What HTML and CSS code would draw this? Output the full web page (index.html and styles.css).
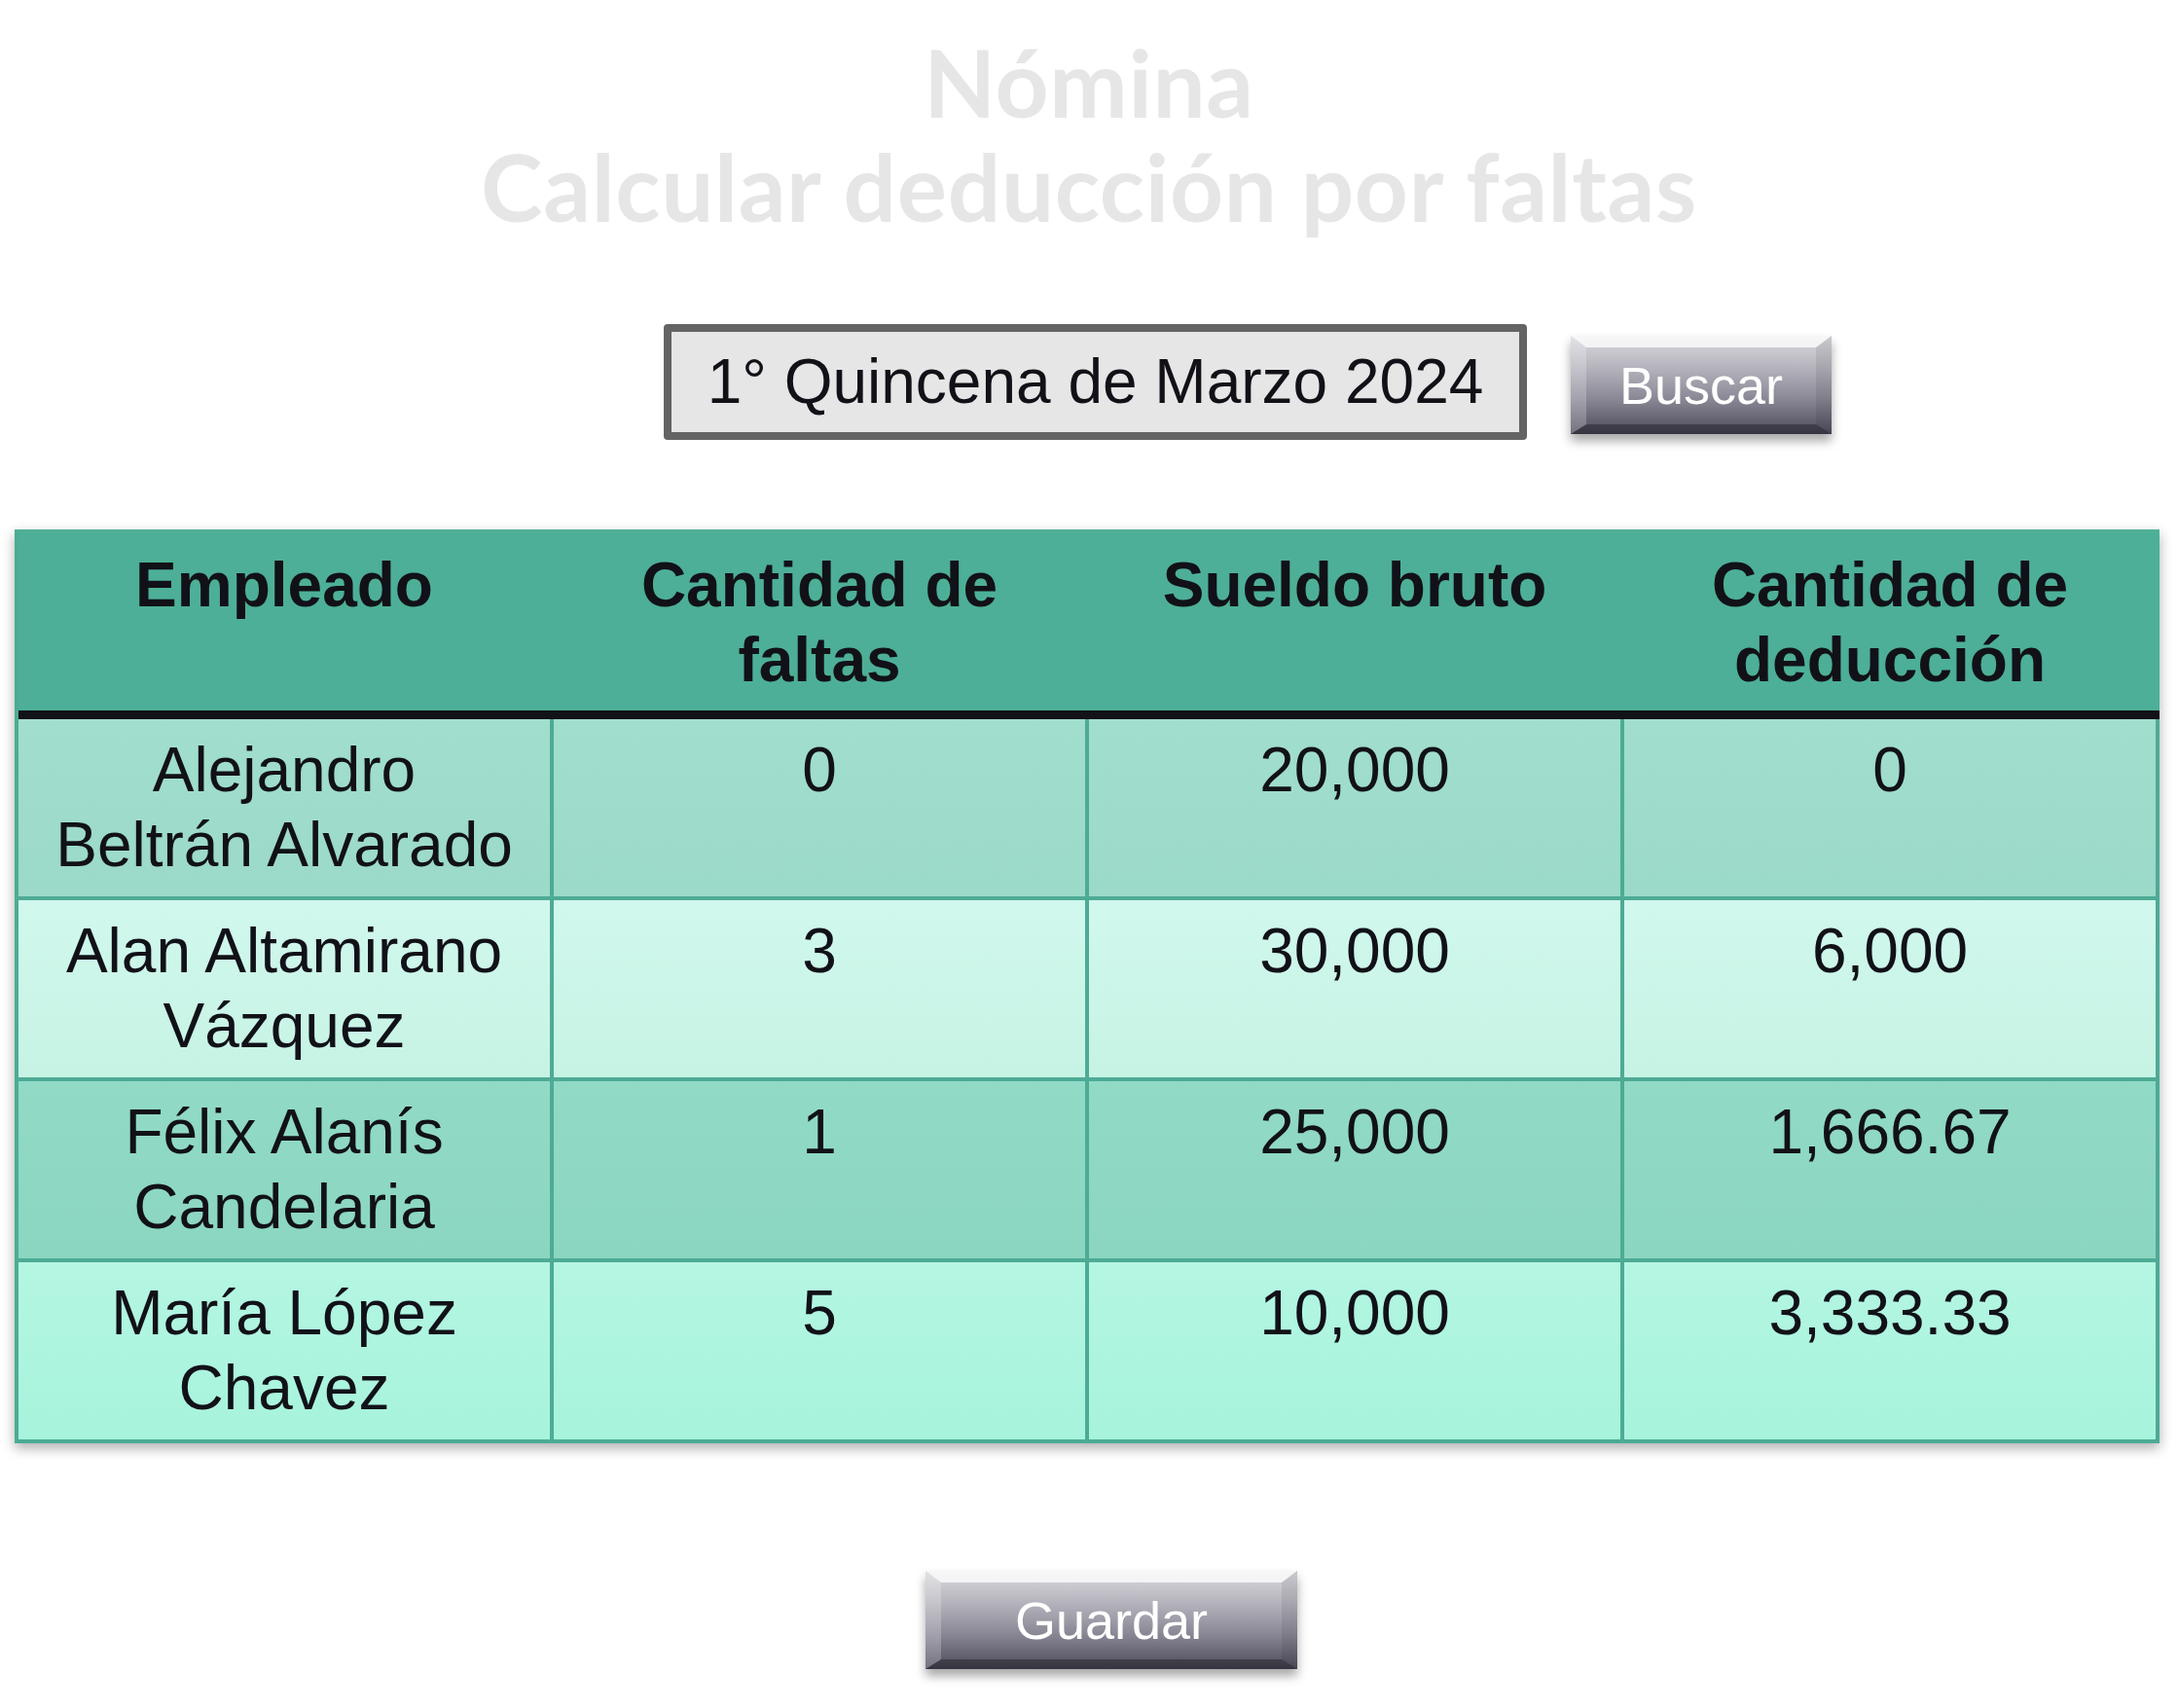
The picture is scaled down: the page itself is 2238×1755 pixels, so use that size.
FILE: index.html
```html
<!DOCTYPE html>
<html lang="es">
<head>
<meta charset="utf-8">
<title>Nómina - Calcular deducción por faltas</title>
<link rel="stylesheet" href="styles.css">
</head>
<body>
<header class="title">
  <h1>Nómina<br>Calcular deducción por faltas</h1>
</header>
<section class="search-row">
  <div class="period">1° Quincena de Marzo 2024</div>
  <button class="bevel-btn search-btn" type="button">Buscar</button>
</section>
<table class="payroll">
  <thead>
    <tr>
      <th>Empleado</th>
      <th>Cantidad de faltas</th>
      <th>Sueldo bruto</th>
      <th>Cantidad de deducción</th>
    </tr>
  </thead>
  <tbody>
    <tr class="r1">
      <td>Alejandro Beltrán Alvarado</td>
      <td>0</td>
      <td>20,000</td>
      <td>0</td>
    </tr>
    <tr class="r2">
      <td>Alan Altamirano Vázquez</td>
      <td>3</td>
      <td>30,000</td>
      <td>6,000</td>
    </tr>
    <tr class="r3">
      <td>Félix Alanís Candelaria</td>
      <td>1</td>
      <td>25,000</td>
      <td>1,666.67</td>
    </tr>
    <tr class="r4">
      <td>María López Chavez</td>
      <td>5</td>
      <td>10,000</td>
      <td>3,333.33</td>
    </tr>
  </tbody>
</table>
<footer class="actions">
  <button class="bevel-btn save-btn" type="button">Guardar</button>
</footer>
</body>
</html>
```

FILE: styles.css
```css
* { box-sizing: border-box; }

html, body {
  margin: 0;
  padding: 0;
  background: #ffffff;
}

body {
  width: 2238px;
  font-family: "Liberation Sans", Arial, sans-serif;
  color: #111118;
}

.title {
  padding-top: 30px;
  text-align: center;
}

.title h1 {
  margin: 0;
  font-family: Lato, "Open Sans", sans-serif;
  font-weight: 700;
  font-size: 96px;
  letter-spacing: 0.7px;
  line-height: 107px;
  color: #e6e6e6;
}

.search-row {
  display: flex;
  align-items: center;
  margin-top: 89px;
  padding-left: 682px;
  gap: 45px;
}

.period {
  width: 887px;
  height: 119px;
  border: 8px solid #646464;
  border-radius: 4px;
  background: #e6e6e6;
  font-size: 64px;
  line-height: 103px;
  text-align: center;
  color: #111118;
}

.bevel-btn {
  position: relative;
  display: block;
  padding: 0;
  border: none;
  font-family: "Liberation Sans", Arial, sans-serif;
  font-size: 54px;
  color: #ffffff;
  background: linear-gradient(180deg, #dadade 0%, #b8b7c0 30%, #8d8b98 62%, #4d4b5b 100%);
  box-shadow: 0 7px 10px rgba(0, 0, 0, 0.35);
}

.bevel-btn::before {
  content: "";
  position: absolute;
  inset: 0;
  border-style: solid;
  border-width: 12px 16px 10px 16px;
  border-color: rgba(255, 255, 255, 0.78) rgba(0, 0, 0, 0.08) rgba(0, 0, 0, 0.3) rgba(255, 255, 255, 0.22);
  pointer-events: none;
}

.search-btn {
  width: 268px;
  height: 101px;
  margin-top: 6px;
}

.payroll {
  margin: 92px 0 0 15px;
  width: 2204px;
  table-layout: fixed;
  border-collapse: separate;
  border-spacing: 0;
  border-left: 4px solid #4dab95;
  border-top: 4px solid #4fb098;
  box-shadow: 0 5px 12px rgba(0, 0, 0, 0.32);
  font-size: 64px;
  line-height: 77px;
  text-align: center;
}

.payroll th,
.payroll td {
  width: 550px;
  vertical-align: top;
}

.payroll th {
  background: #4daf97;
  border-bottom: 9px solid #121219;
  font-weight: 700;
  padding: 15px 24px 13px 20px;
}

.payroll td {
  border-right: 4px solid #4dab95;
  border-bottom: 4px solid #4dab95;
  padding: 14px 35px 14px;
  font-weight: 400;
}

.payroll .r1 td { background: linear-gradient(180deg, #a1decd, #9bd9c8); }
.payroll .r2 td { background: linear-gradient(180deg, #d1f8ed, #c6f3e4); }
.payroll .r3 td { background: linear-gradient(180deg, #91dac6, #8bd6c1); }
.payroll .r4 td { background: linear-gradient(180deg, #b4f6e2, #a7f3dc); }

.actions {
  padding: 131px 0 40px 951px;
}

.save-btn {
  width: 382px;
  height: 101px;
}
```
